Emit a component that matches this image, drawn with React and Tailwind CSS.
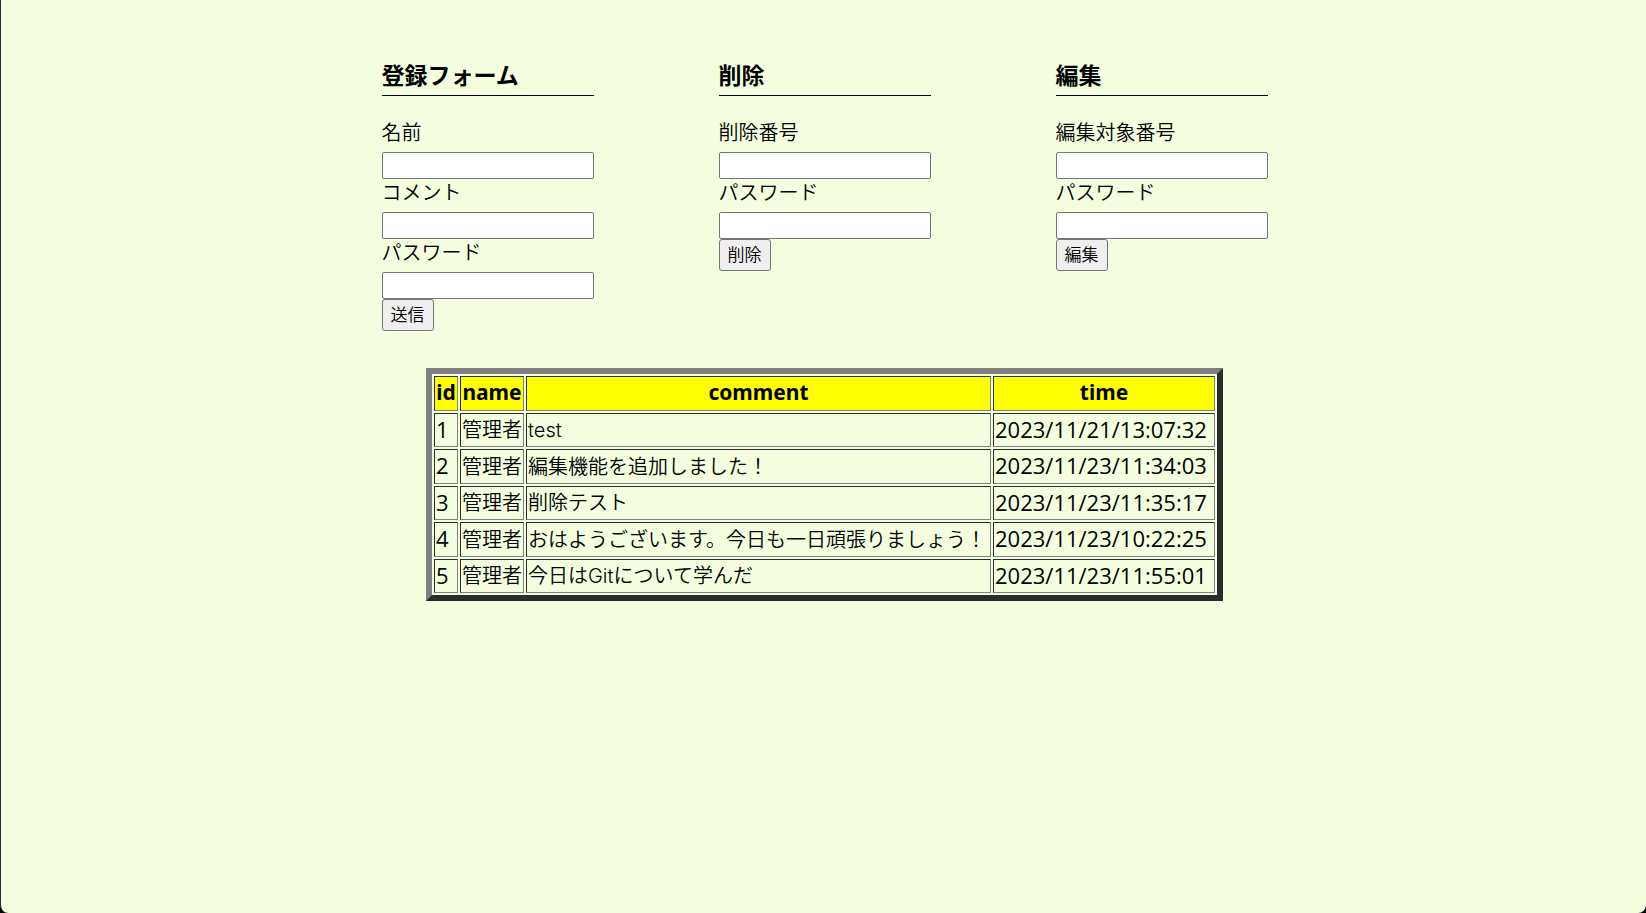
const forms = [
  { title: '登録フォーム', fields: ['名前', 'コメント', 'パスワード'], action: '送信' },
  { title: '削除', fields: ['削除番号', 'パスワード'], action: '削除' },
  { title: '編集', fields: ['編集対象番号', 'パスワード'], action: '編集' },
];

const posts = [
  { id: 1, name: '管理者', comment: 'test', time: '2023/11/21/13:07:32' },
  { id: 2, name: '管理者', comment: '編集機能を追加しました！', time: '2023/11/23/11:34:03' },
  { id: 3, name: '管理者', comment: '削除テスト', time: '2023/11/23/11:35:17' },
  { id: 4, name: '管理者', comment: 'おはようございます。今日も一日頑張りましょう！', time: '2023/11/23/10:22:25' },
  { id: 5, name: '管理者', comment: '今日はGitについて学んだ', time: '2023/11/23/11:55:01' },
];

const cell = 'border border-t-[#2c2c2c] border-l-[#2c2c2c] border-r-[#808080] border-b-[#808080] whitespace-nowrap';
const textCell = `${cell} px-px py-0 leading-8`;
const numberCell = `${cell} px-px py-0 align-top text-[22px] leading-[30px] font-normal font-['Open_Sans',sans-serif]`;
const headCell = `${cell} p-0 text-center align-top text-[21px] leading-[31px] font-bold font-['Noto_Sans',sans-serif]`;

function EntryForm({ title, fields, action, formId }) {
  return (
    <form className="w-[212px]" onSubmit={(e) => e.preventDefault()}>
      <h2 className="mb-[23px] border-b border-black pb-px text-[23px] leading-[35px] font-bold">{title}</h2>
      {fields.map((label, i) => (
        <div key={label}>
          <label htmlFor={`${formId}-${i}`} className="block h-[33px] leading-7">
            {label}
          </label>
          <input
            id={`${formId}-${i}`}
            type={label === 'パスワード' ? 'password' : 'text'}
            className="block h-[27px] w-full rounded-[2px] border border-[#767676] bg-white px-0.5 text-[17px]"
          />
        </div>
      ))}
      <button
        type="submit"
        className="block h-8 w-[52px] rounded-[3px] border border-[#767676] bg-[#efefef] text-[17px] leading-7"
      >
        {action}
      </button>
    </form>
  );
}

export default function App() {
  return (
    <div className="flex min-h-screen bg-black">
      <main className="flex-1 rounded-b-lg border-l border-[#2b2b33] bg-[#f5ffe0] pt-[59px] pl-0.5 text-[20px] font-[350] text-black font-['Inter','Noto_Sans_CJK_JP',sans-serif]">
        <div className="flex justify-center gap-[125px]">
          {forms.map((form, i) => (
            <EntryForm key={form.title} {...form} formId={`form-${i}`} />
          ))}
        </div>
        <table className="mx-auto mt-[37px] border-separate border-spacing-0.5 border-6 border-t-[#808080] border-l-[#808080] border-r-[#2c2c2c] border-b-[#2c2c2c]">
          <thead>
            <tr className="h-[35px] bg-[#ffff00]">
              <th className={`${headCell} w-6`}>id</th>
              <th className={`${headCell} w-16`}>name</th>
              <th className={`${headCell} w-[465px]`}>comment</th>
              <th className={`${headCell} w-[222px]`}>time</th>
            </tr>
          </thead>
          <tbody>
            {posts.map((post) => (
              <tr key={post.id} className="h-[34px] even:h-[35px]">
                <td className={numberCell}>{post.id}</td>
                <td className={textCell}>{post.name}</td>
                <td className={textCell}>{post.comment}</td>
                <td className={numberCell}>{post.time}</td>
              </tr>
            ))}
          </tbody>
        </table>
      </main>
    </div>
  );
}
